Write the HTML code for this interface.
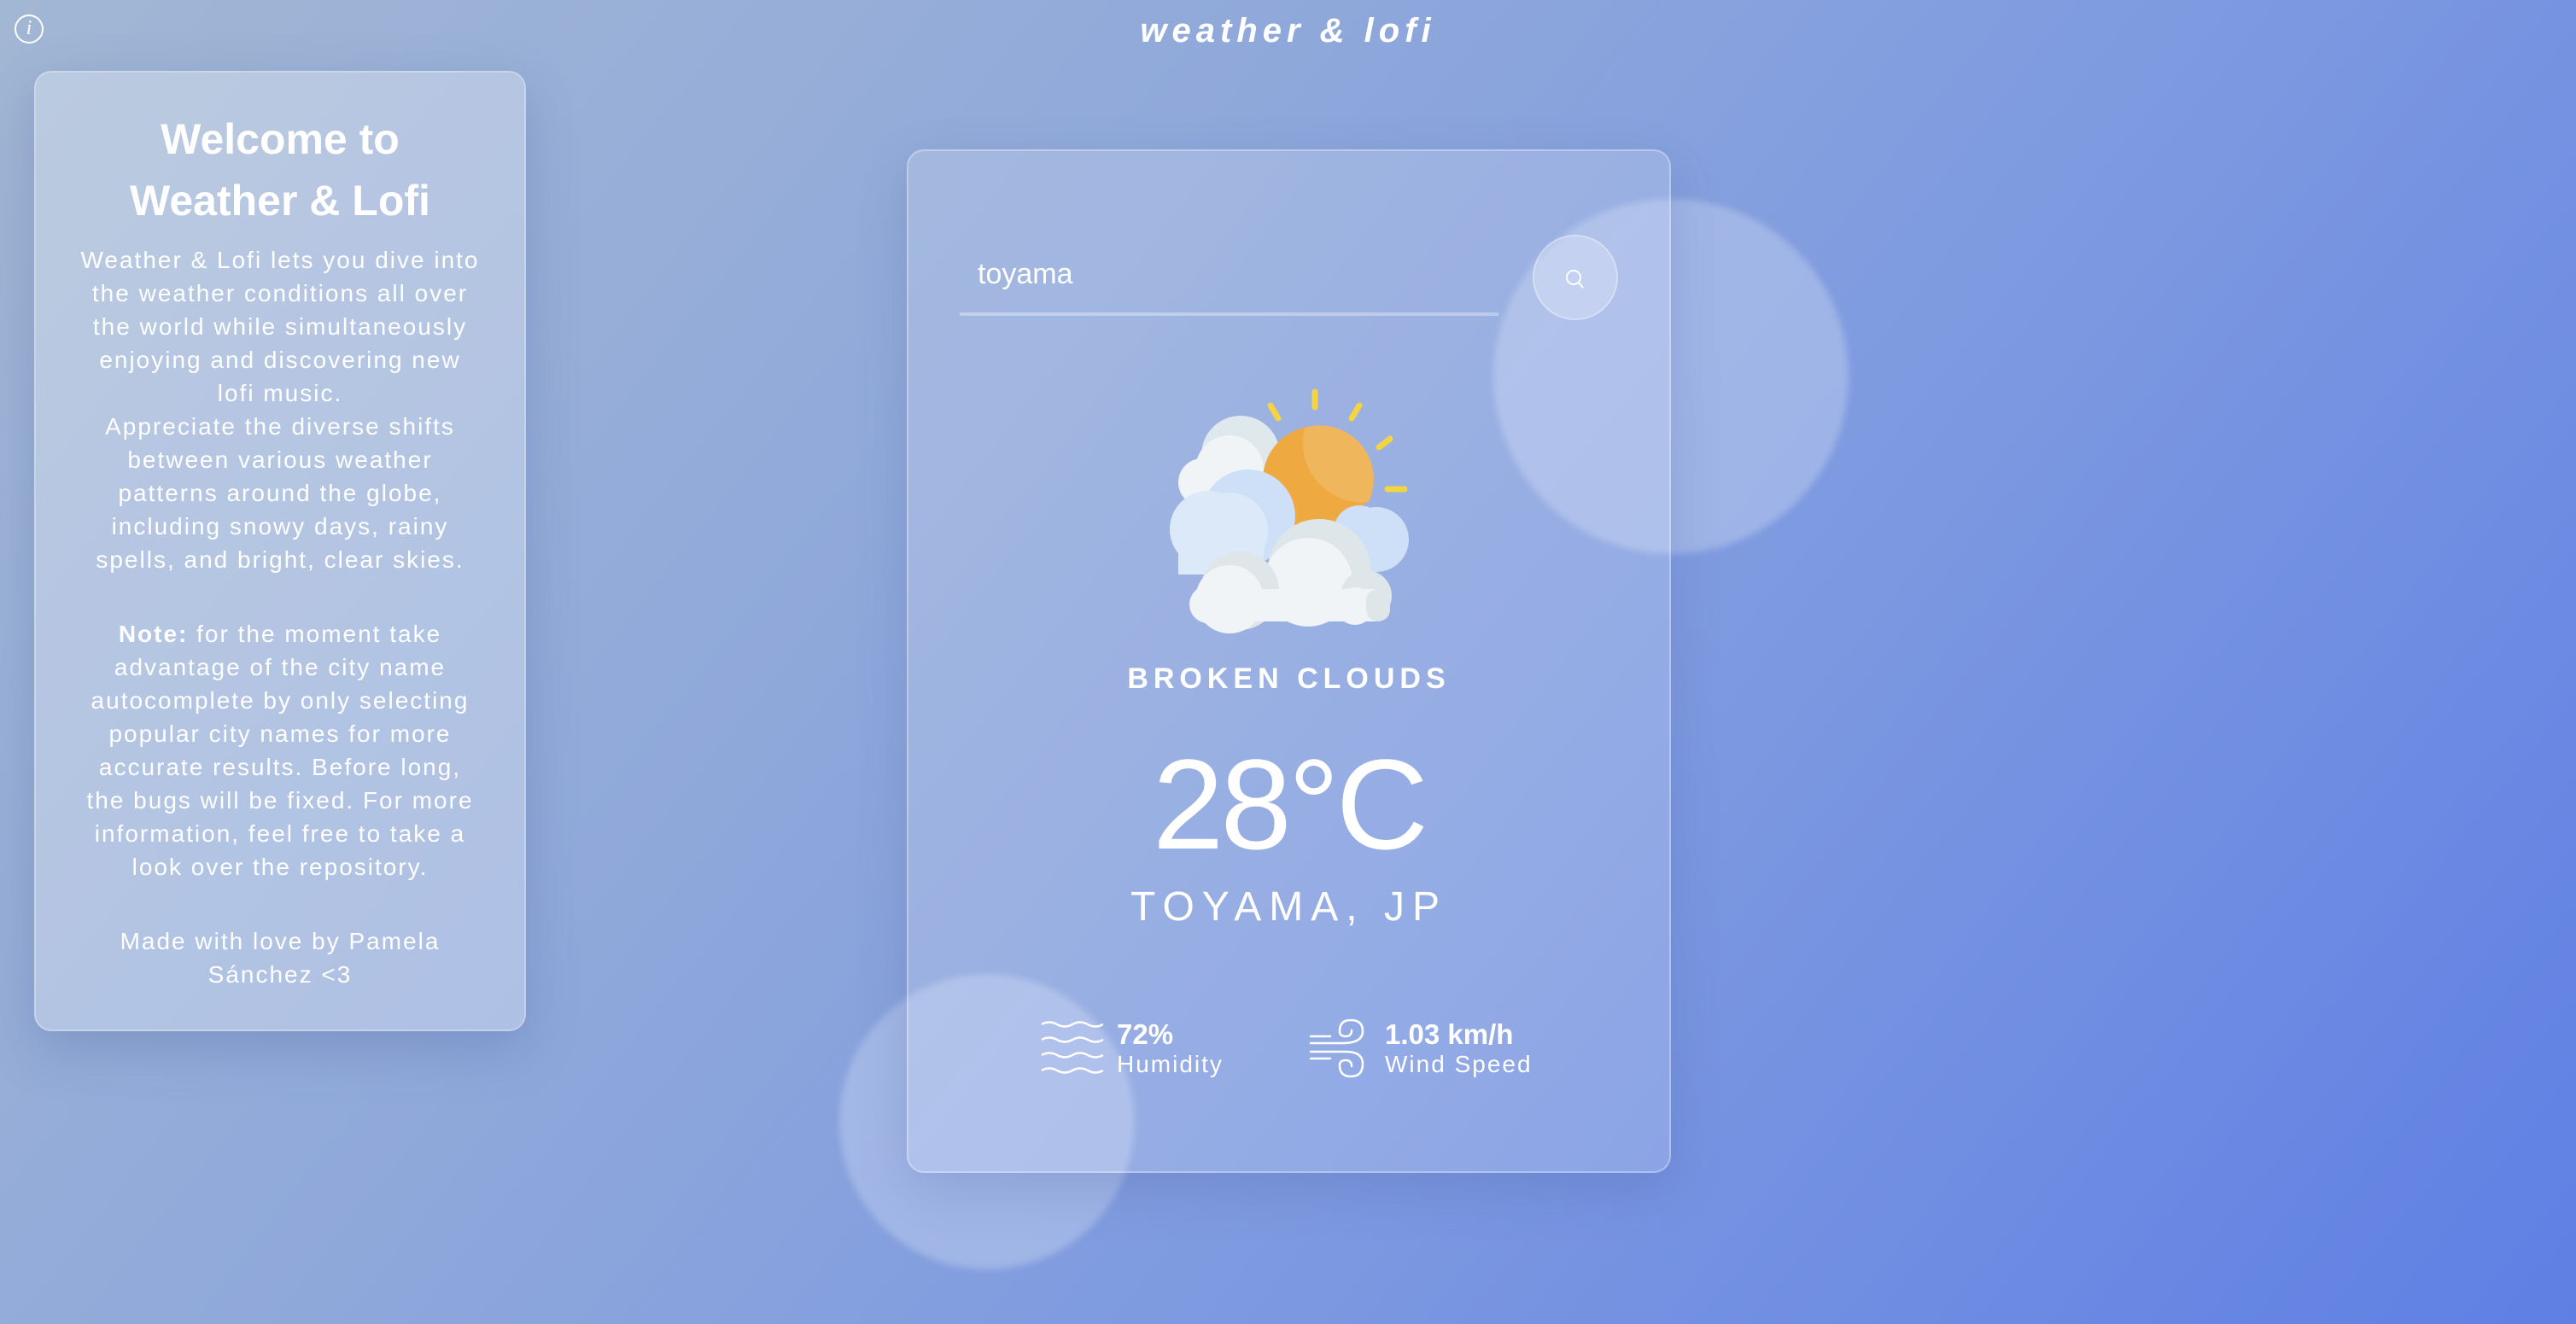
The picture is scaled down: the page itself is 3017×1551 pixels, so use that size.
<!DOCTYPE html>
<html><head><meta charset="utf-8"><style>
*{margin:0;padding:0;box-sizing:border-box}
body{width:3017px;height:1551px;overflow:hidden;position:relative;font-family:"Liberation Sans",sans-serif;color:#fff;
background:linear-gradient(128deg,#a2b7d4 0%,#90a9da 35%,#7f9be0 60%,#5f7fe4 100%);}
.abs{position:absolute}
.title{left:0;width:3017px;top:14px;text-align:center;font-size:40px;font-style:italic;font-weight:bold;letter-spacing:6px}
.info{left:17px;top:17px;width:34px;height:34px;border:2.5px solid #fff;border-radius:50%;text-align:center;font-family:"Liberation Serif",serif;font-style:italic;font-size:24px;line-height:29px}
.left{left:40px;top:83px;width:576px;height:1125px;border-radius:20px;background:rgba(255,255,255,0.28);border:2px solid rgba(255,255,255,0.25);box-shadow:0 20px 60px rgba(60,80,140,0.25);text-align:center}
.left h1{font-size:50px;line-height:72px;margin-top:42px;font-weight:bold}
.left p{font-size:28px;line-height:39px;letter-spacing:2px;margin:14px 0 0;white-space:nowrap}
.circle{border-radius:50%;background:rgba(190,205,240,0.5);filter:blur(4px)}
.main{left:1062px;top:175px;width:895px;height:1199px;border-radius:20px;background:rgba(255,255,255,0.16);border:2px solid rgba(255,255,255,0.3);box-shadow:0 20px 60px rgba(60,80,140,0.2)}
.c{position:absolute;left:1062px;width:895px;text-align:center}
</style></head><body>
<div class="abs circle" style="left:1749px;top:233px;width:416px;height:416px"></div>
<div class="abs circle" style="left:983px;top:1141px;width:346px;height:346px"></div>
<div class="abs title">weather &amp; lofi</div>
<div class="abs info">i</div>
<div class="abs left">
<h1>Welcome to<br>Weather &amp; Lofi</h1>
<p>Weather &amp; Lofi lets you dive into<br>the weather conditions all over<br>the world while simultaneously<br>enjoying and discovering new<br>lofi music.<br>Appreciate the diverse shifts<br>between various weather<br>patterns around the globe,<br>including snowy days, rainy<br>spells, and bright, clear skies.</p>
<p style="margin-top:48px"><b>Note:</b> for the moment take<br>advantage of the city name<br>autocomplete by only selecting<br>popular city names for more<br>accurate results. Before long,<br>the bugs will be fixed. For more<br>information, feel free to take a<br>look over the repository.</p>
<p style="margin-top:48px">Made with love by Pamela<br>Sánchez &lt;3</p>
</div>
<div class="abs main"></div>
<div class="abs" style="left:1145px;top:302px;font-size:34px">toyama</div>
<div class="abs" style="left:1124px;top:366px;width:631px;height:4px;background:rgba(255,255,255,0.35)"></div>
<div class="abs" style="left:1795px;top:275px;width:100px;height:100px;border-radius:50%;background:rgba(255,255,255,0.25);border:2px solid rgba(255,255,255,0.3)"></div>
<svg class="abs" style="left:1830px;top:312px" width="30" height="30" viewBox="0 0 30 30"><circle cx="13" cy="13" r="8" fill="none" stroke="#fff" stroke-width="2"/><path d="M19 19l5 6" stroke="#fff" stroke-width="2"/></svg>
<svg class="abs" style="left:1300px;top:400px" width="450" height="360" viewBox="0 0 450 360">
<g stroke="#f5d442" stroke-width="7" stroke-linecap="round">
<path d="M188 75L197 90M240 59V77M292 75L283 90M328 114L315 124M325 173H345"/></g>
<circle cx="153" cy="133" r="46" fill="#dfe8ec"/><circle cx="140" cy="150" r="40" fill="#f0f4f7"/><circle cx="108" cy="165" r="28" fill="#f0f4f7"/>
<circle cx="242" cy="162" r="63" fill="#efa941"/>
<path d="M228 101A63 63 0 0 1 303 188A70 70 0 0 1 228 101Z" fill="#f0b65c"/>
<circle cx="162" cy="205" r="55" fill="#cde0f7"/><circle cx="140" cy="222" r="45" fill="#dbe9f9"/><circle cx="115" cy="220" r="45" fill="#dbe9f9"/>
<circle cx="312" cy="232" r="38" fill="#cde0f7"/><circle cx="292" cy="222" r="30" fill="#cde0f7"/>
<rect x="80" y="225" width="100" height="48" fill="#dbe9f9"/>
<circle cx="245" cy="268" r="60" fill="#dfe6ea"/><circle cx="232" cy="282" r="52" fill="#f0f4f7"/>
<circle cx="152" cy="292" r="46" fill="#dfe6ea"/><circle cx="140" cy="302" r="40" fill="#f0f4f7"/>
<circle cx="300" cy="298" r="30" fill="#dfe6ea"/><circle cx="287" cy="310" r="22" fill="#f0f4f7"/>
<circle cx="115" cy="308" r="22" fill="#f0f4f7"/>
<rect x="94" y="290" width="234" height="38" rx="18" fill="#f0f4f7"/>
<rect x="300" y="290" width="28" height="38" rx="14" fill="#dfe6ea"/>
</svg>
<div class="c" style="top:776px;font-size:34px;letter-spacing:6px;font-weight:bold">BROKEN CLOUDS</div>
<div class="c" style="top:862px;font-size:150px;line-height:160px;letter-spacing:-4px">28°C</div>
<div class="c" style="top:1035px;font-size:48px;letter-spacing:9px">TOYAMA, JP</div>
<svg class="abs" style="left:1218px;top:1195px" width="74" height="66" viewBox="0 0 74 66"><g fill="none" stroke="#fff" stroke-width="2.5"><path d="M2 5q9-5 18 0t18 0t18 0t18 0M2 23q9-5 18 0t18 0t18 0t18 0M2 41q9-5 18 0t18 0t18 0t18 0M2 59q9-5 18 0t18 0t18 0t18 0"/></g></svg>
<div class="abs" style="left:1308px;top:1193px;font-size:33px;font-weight:bold">72%</div>
<div class="abs" style="left:1308px;top:1231px;font-size:28px;letter-spacing:2px">Humidity</div>
<svg class="abs" style="left:1532px;top:1192px" width="74" height="72" viewBox="0 0 74 72"><g fill="none" stroke="#fff" stroke-width="2.5" stroke-linecap="round"><path d="M3 22H26M3 30H40Q64 30 64 16Q64 3 50 3Q37 3 37 16Q37 22 44 22Q51 22 51 15M3 40H44Q64 40 64 54Q64 69 50 69Q37 69 37 56Q37 50 44 50Q51 50 51 57M3 48H26"/></g></svg>
<div class="abs" style="left:1622px;top:1193px;font-size:33px;font-weight:bold">1.03 km/h</div>
<div class="abs" style="left:1622px;top:1231px;font-size:28px;letter-spacing:2px">Wind Speed</div>
</body></html>
